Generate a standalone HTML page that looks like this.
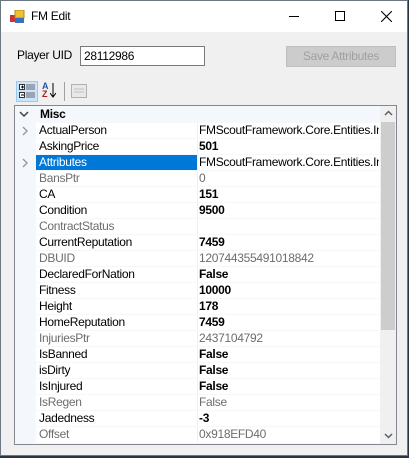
<!DOCTYPE html>
<html><head><style>
*{margin:0;padding:0;box-sizing:border-box}
body{width:409px;height:458px;background:#2a3440;position:relative;overflow:hidden;font-family:"Liberation Sans",sans-serif;font-size:12px;color:#000;letter-spacing:-0.3px}
.win{position:absolute;left:0;top:0;width:408px;height:456px;background:#f0f0f0;border:1px solid #6b7683}
.title{position:absolute;left:0;top:0;width:406px;height:31px;background:#fff}
.title .t{position:absolute;left:30px;top:8px;font-size:12px}
.abs{position:absolute}
.row{position:absolute;left:35px;width:344px;height:15px;background:#fff;line-height:15px}
.row .n{position:absolute;left:3px;top:0}
.row .v{position:absolute;left:163px;top:0;white-space:nowrap;overflow:hidden;width:180px}
.row .sep{position:absolute;left:161px;top:0;width:1px;height:15px;background:#f0f0f0}
.g{color:#6d6d6d}
.b{font-weight:bold}
</style></head><body>
<div class="win">
<div class="title">
<svg class="abs" style="left:9px;top:9px" width="16" height="14"><rect x="0" y="5" width="5" height="7" fill="#c33"/><rect x="5" y="0" width="9" height="8" fill="#f0c030" stroke="#b58a10"/><rect x="5" y="8" width="9" height="5" fill="#3a6fc8"/></svg>
<div class="t">FM Edit</div>
<div class="abs" style="left:288px;top:15px;width:10px;height:1px;background:#000"></div>
<div class="abs" style="left:334px;top:10px;width:10px;height:10px;border:1px solid #000"></div>
<svg class="abs" style="left:380px;top:10px" width="11" height="11"><path d="M0 0L11 11M11 0L0 11" stroke="#000" stroke-width="1.1"/></svg>
</div>
<div class="abs" style="left:16px;top:47px">Player UID</div>
<div class="abs" style="left:79px;top:45px;width:125px;height:20px;background:#fff;border:1px solid #7a7a7a;padding:2px 3px">28112986</div>
<div class="abs" style="left:285px;top:45px;width:110px;height:21px;background:#cccccc;border:1px solid #bfbfbf;color:#a0a0a0;text-align:center;line-height:19px">Save Attributes</div>
<div class="abs" style="left:15px;top:80px;width:22px;height:21px;background:#cce4f7;border:1px solid #99c9ef"></div>
<svg class="abs" style="left:18px;top:83px" width="17" height="16"><rect x="0.5" y="0.5" width="5" height="5" fill="#fff" stroke="#333"/><rect x="0.5" y="8.5" width="5" height="5" fill="#fff" stroke="#333"/><path d="M2 3h3M3.5 1.5v3M2 11h3" stroke="#000"/><path d="M7 1h9M7 3h9M7 5h9M7 9h9M7 11h9M7 13h9" stroke="#667" stroke-width="1"/></svg>
<div class="abs" style="left:41px;top:81px;font-size:9px;line-height:8px;color:#2255aa;font-weight:bold">A<br><span style="color:#a02020">Z</span></div>
<svg class="abs" style="left:49px;top:82px" width="6" height="16"><path d="M3 0v14M0 10l3 4 3-4" stroke="#000" fill="none"/></svg>
<div class="abs" style="left:63px;top:81px;width:1px;height:19px;background:#a0a0a0"></div>
<svg class="abs" style="left:70px;top:83px" width="16" height="14"><rect x="0.5" y="0.5" width="15" height="13" fill="#e8e8e8" stroke="#b0b0b0"/><path d="M3 5h10M3 8h10" stroke="#c0c0c0"/></svg>
<div class="abs" style="left:13px;top:104px;width:383px;height:340px;border:1px solid #828790;background:#f4f7fc"></div>
<div class="abs" style="left:379px;top:105px;width:16px;height:338px;background:#f0f0f0"></div>
<div class="abs" style="left:380px;top:121px;width:14px;height:208px;background:#cdcdcd"></div>
<svg class="abs" style="left:383px;top:109px" width="9" height="6"><path d="M1 5l3.5-3.5L8 5" stroke="#606060" stroke-width="1.5" fill="none"/></svg>
<svg class="abs" style="left:383px;top:432px" width="9" height="6"><path d="M1 1l3.5 3.5L8 1" stroke="#606060" stroke-width="1.5" fill="none"/></svg>
<svg class="abs" style="left:18px;top:110px" width="10" height="6"><path d="M1 1l4 4 4-4" stroke="#444" stroke-width="1.5" fill="none"/></svg>
<div class="abs b" style="left:39px;top:106px">Misc</div>
<svg class="abs" style="left:21px;top:125px" width="6" height="10"><path d="M1 1l4 4-4 4" stroke="#999" stroke-width="1.4" fill="none"/></svg>
<svg class="abs" style="left:21px;top:157px" width="6" height="10"><path d="M1 1l4 4-4 4" stroke="#999" stroke-width="1.4" fill="none"/></svg>
<div class="row" style="top:122px"><span class="n">ActualPerson</span><span class="sep"></span><span class="v">FMScoutFramework.Core.Entities.InGame</span></div>
<div class="row" style="top:138px"><span class="n">AskingPrice</span><span class="sep"></span><span class="v b">501</span></div>
<div class="row" style="top:154px"><span class="n" style="left:0;padding-left:3px;width:161px;background:#0078d7;color:#fff;height:15px">Attributes</span><span class="sep"></span><span class="v">FMScoutFramework.Core.Entities.InGame</span></div>
<div class="row" style="top:170px"><span class="n g">BansPtr</span><span class="sep"></span><span class="v g">0</span></div>
<div class="row" style="top:186px"><span class="n">CA</span><span class="sep"></span><span class="v b">151</span></div>
<div class="row" style="top:202px"><span class="n">Condition</span><span class="sep"></span><span class="v b">9500</span></div>
<div class="row" style="top:218px"><span class="n g">ContractStatus</span><span class="sep"></span><span class="v g"></span></div>
<div class="row" style="top:234px"><span class="n">CurrentReputation</span><span class="sep"></span><span class="v b">7459</span></div>
<div class="row" style="top:250px"><span class="n g">DBUID</span><span class="sep"></span><span class="v g">120744355491018842</span></div>
<div class="row" style="top:266px"><span class="n">DeclaredForNation</span><span class="sep"></span><span class="v b">False</span></div>
<div class="row" style="top:282px"><span class="n">Fitness</span><span class="sep"></span><span class="v b">10000</span></div>
<div class="row" style="top:298px"><span class="n">Height</span><span class="sep"></span><span class="v b">178</span></div>
<div class="row" style="top:314px"><span class="n">HomeReputation</span><span class="sep"></span><span class="v b">7459</span></div>
<div class="row" style="top:330px"><span class="n g">InjuriesPtr</span><span class="sep"></span><span class="v g">2437104792</span></div>
<div class="row" style="top:346px"><span class="n">IsBanned</span><span class="sep"></span><span class="v b">False</span></div>
<div class="row" style="top:362px"><span class="n">isDirty</span><span class="sep"></span><span class="v b">False</span></div>
<div class="row" style="top:378px"><span class="n">IsInjured</span><span class="sep"></span><span class="v b">False</span></div>
<div class="row" style="top:394px"><span class="n g">IsRegen</span><span class="sep"></span><span class="v g">False</span></div>
<div class="row" style="top:410px"><span class="n">Jadedness</span><span class="sep"></span><span class="v b">-3</span></div>
<div class="row" style="top:426px;height:16px"><span class="n g">Offset</span><span class="sep"></span><span class="v g">0x918EFD40</span></div>
</div>
</body></html>
